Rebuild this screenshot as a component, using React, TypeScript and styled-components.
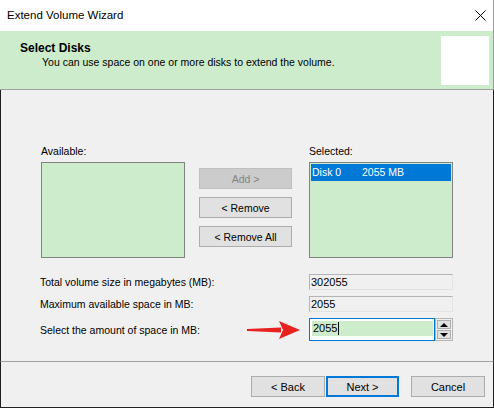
import styled, { createGlobalStyle } from 'styled-components'

const GlobalStyle = createGlobalStyle`
  html, body {
    margin: 0;
    padding: 0;
    background: #f0f0f0;
  }
  body {
    font-family: "Liberation Sans", Arial, sans-serif;
    font-size: 10.5px;
    color: #000;
  }
`

const GREEN = '#cdeccb'
const BLUE = '#0078d7'

const ArrowIcon = () => (
  <svg width="54" height="18" viewBox="0 0 54 18">
    <polygon points="0,8 34,6.5 34,11.5 0,10" fill="#e8201e" />
    <polygon points="32,0 53,9 32,18 36,9" fill="#e8201e" />
  </svg>
)

const CloseIcon = () => (
  <svg width="11" height="11" viewBox="0 0 11 11">
    <path d="M0.5 0.5 L10.5 10.5 M10.5 0.5 L0.5 10.5" stroke="#000" strokeWidth="1" />
  </svg>
)

const App = () => {
  return (
    <>
      <GlobalStyle />
      <Window>
        <TitleBar>
          <Title>Extend Volume Wizard</Title>
          <CloseBox>
            <CloseIcon />
          </CloseBox>
        </TitleBar>

        <Header>
          <HeaderText>
            <HeaderTitle>Select Disks</HeaderTitle>
            <HeaderSub>You can use space on one or more disks to extend the volume.</HeaderSub>
          </HeaderText>
          <HeaderImage />
        </Header>

        <Body>
          <DiskSection>
            <ListColumn>
              <ListLabel>Available:</ListLabel>
              <ListBox />
            </ListColumn>
            <ButtonColumn>
              <Button $disabled disabled>
                Add &gt;
              </Button>
              <Button>&lt; Remove</Button>
              <Button>&lt; Remove All</Button>
            </ButtonColumn>
            <ListColumn $right>
              <ListLabel>Selected:</ListLabel>
              <ListBox>
                <ListItem>
                  <DiskName>Disk 0</DiskName>
                  <span>2055 MB</span>
                </ListItem>
              </ListBox>
            </ListColumn>
          </DiskSection>

          <Fields>
            <FieldRow $height={16}>
              <FieldLabel>Total volume size in megabytes (MB):</FieldLabel>
              <ReadOnlyField>302055</ReadOnlyField>
            </FieldRow>
            <FieldRow $height={16}>
              <FieldLabel>Maximum available space in MB:</FieldLabel>
              <ReadOnlyField>2055</ReadOnlyField>
            </FieldRow>
            <FieldRow $height={23}>
              <FieldLabel>
                <span>Select the amount of space in MB:</span>
                <ArrowIcon />
              </FieldLabel>
              <SpinBox>
                <SpinInput>
                  <SpinValue>
                    2055<Caret />
                  </SpinValue>
                </SpinInput>
                <SpinButtons>
                  <SpinButton>
                    <Triangle $up />
                  </SpinButton>
                  <SpinButton>
                    <Triangle />
                  </SpinButton>
                </SpinButtons>
              </SpinBox>
            </FieldRow>
          </Fields>
        </Body>

        <Footer>
          <FooterButton>&lt; Back</FooterButton>
          <FooterButton $default>Next &gt;</FooterButton>
          <FooterButton $gap>Cancel</FooterButton>
        </Footer>
      </Window>
    </>
  )
}

const Window = styled.div`
  width: 494px;
  height: 408px;
  display: flex;
  flex-direction: column;
  box-sizing: border-box;
  overflow: hidden;
`

const TitleBar = styled.div`
  height: 31px;
  flex-shrink: 0;
  display: flex;
  align-items: center;
  justify-content: space-between;
  background: #fff;
  padding-left: 7px;
  border-right: 1px solid #9a9a9a;
  box-sizing: border-box;
`

const Title = styled.span`
  font-size: 11.5px;
  color: #000;
  margin-top: -1px;
`

const CloseBox = styled.div`
  display: flex;
  margin-right: 7px;
  margin-top: -1px;
`

const Header = styled.div`
  height: 59px;
  flex-shrink: 0;
  display: flex;
  justify-content: space-between;
  align-items: flex-start;
  background: ${GREEN};
  border-bottom: 1px solid #a0a0a0;
  border-right: 1px solid #9a9a9a;
  box-sizing: border-box;
`

const HeaderText = styled.div`
  padding: 10px 0 0 20px;
`

const HeaderTitle = styled.div`
  font-weight: bold;
  font-size: 12px;
  line-height: 14px;
`

const HeaderSub = styled.div`
  padding-left: 22px;
  line-height: 15px;
`

const HeaderImage = styled.div`
  width: 48px;
  height: 49px;
  background: #fff;
  margin: 5px 4px 0 0;
`

const Body = styled.div`
  height: 272px;
  flex-shrink: 0;
  box-sizing: border-box;
  padding: 55px 0 0 39px;
  border-left: 1px solid #1f1f1f;
  border-right: 1px solid #1f1f1f;
  border-bottom: 1px solid #a0a0a0;
  background: #f0f0f0;
`

const DiskSection = styled.div`
  display: flex;
  align-items: flex-start;
  padding-left: 1px;
`

const ListColumn = styled.div<{ $right?: boolean }>`
  width: 144px;
  display: flex;
  flex-direction: column;
  margin-left: ${({ $right }) => ($right ? '17px' : '0')};
`

const ListLabel = styled.div`
  line-height: 12px;
  margin-bottom: 5px;
`

const ListBox = styled.div`
  height: 96px;
  box-sizing: border-box;
  border: 1px solid #828282;
  background: ${GREEN};
  padding: 1px;
`

const ListItem = styled.div`
  height: 17px;
  line-height: 16px;
  background: ${BLUE};
  color: #fff;
  padding-left: 1px;
  display: flex;
`

const DiskName = styled.span`
  width: 50px;
`

const ButtonColumn = styled.div`
  width: 93px;
  margin-left: 14px;
  padding-top: 23px;
  display: flex;
  flex-direction: column;
  gap: 8px;
`

const Button = styled.button<{ $disabled?: boolean }>`
  height: 21px;
  width: 93px;
  padding: 0;
  margin: 0;
  font-family: inherit;
  font-size: 10.5px;
  box-sizing: border-box;
  border: 1px solid ${({ $disabled }) => ($disabled ? '#bfbfbf' : '#adadad')};
  background: ${({ $disabled }) => ($disabled ? '#cccccc' : '#e1e1e1')};
  color: ${({ $disabled }) => ($disabled ? '#838383' : '#000')};
`

const Fields = styled.div`
  margin-top: 16px;
  display: flex;
  flex-direction: column;
  gap: 6px;
`

const FieldRow = styled.div<{ $height: number }>`
  display: grid;
  grid-template-columns: 269px 144px;
  height: ${({ $height }) => $height}px;
  align-items: center;
`

const FieldLabel = styled.div`
  display: flex;
  align-items: center;
  justify-content: space-between;
  padding-right: 8px;
`

const ReadOnlyField = styled.div`
  height: 16px;
  box-sizing: border-box;
  border: 1px solid #e3e3e3;
  border-top-color: #b4b4b4;
  border-left-color: #b4b4b4;
  padding-left: 1px;
  line-height: 14px;
  font-size: 11px;
`

const SpinBox = styled.div`
  display: flex;
  height: 23px;
`

const SpinInput = styled.div`
  width: 126px;
  box-sizing: border-box;
  border: 1px solid ${BLUE};
  background: #fff;
  padding: 2px 1px 0 2px;
`

const SpinValue = styled.div`
  height: 15px;
  line-height: 15px;
  font-size: 11px;
  background: ${GREEN};
  display: flex;
  align-items: center;
  padding-left: 1px;
`

const Caret = styled.span`
  display: inline-block;
  width: 1px;
  height: 13px;
  background: #000;
  margin-left: 1px;
`

const SpinButtons = styled.div`
  width: 18px;
  box-sizing: border-box;
  border: 1px solid #b4b4b4;
  display: flex;
  flex-direction: column;
  gap: 1px;
  padding: 1px;
  background: #f0f0f0;
`

const SpinButton = styled.div`
  flex: 1;
  box-sizing: border-box;
  border: 1px solid #adadad;
  background: #e1e1e1;
  display: flex;
  align-items: center;
  justify-content: center;
`

const Triangle = styled.span<{ $up?: boolean }>`
  width: 0;
  height: 0;
  border-left: 4px solid transparent;
  border-right: 4px solid transparent;
  ${({ $up }) => ($up ? 'border-bottom: 4px solid #000;' : 'border-top: 4px solid #000;')}
`

const Footer = styled.div`
  flex: 1;
  display: flex;
  justify-content: flex-end;
  align-items: flex-start;
  padding: 14px 8px 0 0;
  border-left: 1px solid #1f1f1f;
  border-right: 1px solid #1f1f1f;
  border-bottom: 1px solid #1f1f1f;
  box-sizing: border-box;
  gap: 1px;
`

const FooterButton = styled.button<{ $default?: boolean; $gap?: boolean }>`
  width: ${({ $default }) => ($default ? '73px' : '74px')};
  height: 21px;
  margin: 0 0 0 ${({ $gap }) => ($gap ? '11px' : '0')};
  padding: 0;
  font-family: inherit;
  font-size: 11px;
  color: #000;
  background: #e1e1e1;
  box-sizing: border-box;
  border: ${({ $default }) => ($default ? `2px solid ${BLUE}` : '1px solid #adadad')};
`

export default App
